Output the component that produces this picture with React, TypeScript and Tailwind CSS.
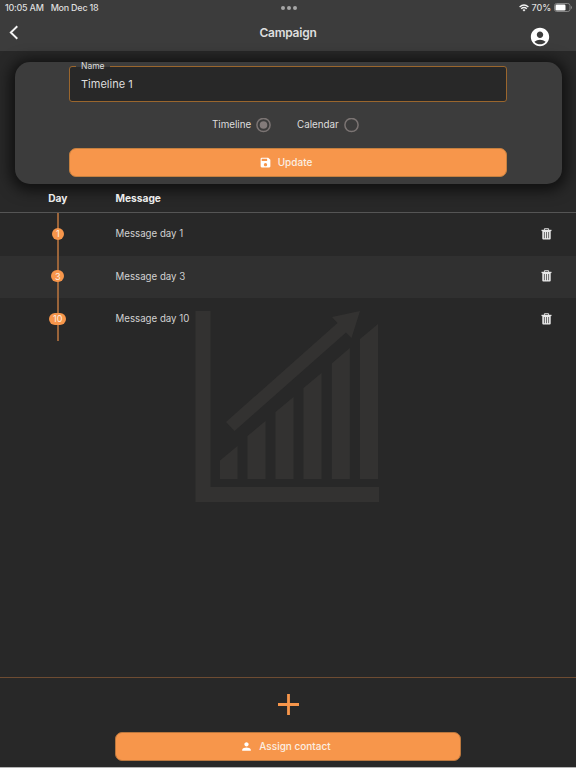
import { MdAccountCircle, MdPerson, MdSave } from 'react-icons/md';

type TimelineMessage = {
  day: number;
  text: string;
};

const messages: TimelineMessage[] = [
  { day: 1, text: 'Message day 1' },
  { day: 3, text: 'Message day 3' },
  { day: 10, text: 'Message day 10' },
];

export default function App() {
  return (
    <div className="flex h-[768px] w-[576px] flex-col overflow-hidden border-b border-[#b4b4b4] bg-[#282828] font-['Inter','Liberation_Sans',sans-serif] text-[#dedede]">
      <Header />
      <div className="px-[15px] pt-[11px]">
        <CampaignForm />
      </div>
      <MessageList />
      <Footer />
    </div>
  );
}

function Header() {
  return (
    <header className="h-[51px] shrink-0 bg-[#3c3c3c]">
      {/* Status bar */}
      <div className="grid h-[15px] grid-cols-3 items-center pl-[5px] pr-[4px] text-[9px] font-medium leading-none">
        <div className="flex gap-[7px] whitespace-nowrap tracking-[-0.25px]">
          <span>10:05 AM</span>
          <span>Mon Dec 18</span>
        </div>
        <div className="flex justify-center gap-[2px]">
          <span className="h-[4px] w-[4px] rounded-full bg-[#a6a6a6]" />
          <span className="h-[4px] w-[4px] rounded-full bg-[#a6a6a6]" />
          <span className="h-[4px] w-[4px] rounded-full bg-[#a6a6a6]" />
        </div>
        <div className="flex items-center justify-end gap-[3px]">
          <WifiIcon />
          <span className="tracking-[-0.1px]">70%</span>
          <BatteryIcon />
        </div>
      </div>
      {/* Title bar */}
      <div className="grid h-[36px] grid-cols-3 pl-[9px] pr-[25px]">
        <button className="flex items-start pt-[10px]">
          <svg width="10" height="15" viewBox="0 0 10 15" fill="none" stroke="#f4f4f4" strokeWidth="1.9">
            <path d="M8.3 1.2 1.8 7.5l6.5 6.3" />
          </svg>
        </button>
        <h1 className="pl-[16px] pt-[9px] text-center text-[12px] font-semibold leading-[17px] tracking-[-0.25px]">
          Campaign
        </h1>
        <button className="flex justify-end pt-[11px] text-white">
          <MdAccountCircle size={22} />
        </button>
      </div>
    </header>
  );
}

function CampaignForm() {
  return (
    <section className="h-[122px] w-[547px] rounded-[15px] bg-[#3c3c3c] px-[54px] pt-[4px] shadow-[0_2px_14px_5px_rgba(0,0,0,0.6)]">
      <div className="relative h-[36px] w-[438px] rounded-[3px] border border-[#9a662d] bg-[#282828] pl-[11px] pt-[8px]">
        <span className="absolute left-[6px] top-[-6px] px-[5px] text-[8.5px] leading-[11px]">
          <span className="absolute inset-x-0 top-[5px] h-px bg-[#3c3c3c]" />
          <span className="relative">Name</span>
        </span>
        <p className="text-[11px] leading-[19px]">Timeline 1</p>
      </div>
      <div className="flex h-[46px] items-center pl-[143px] text-[9.8px]">
        <span className="w-[44px]">Timeline</span>
        <Radio checked />
        <span className="ml-[26px] w-[47px]">Calendar</span>
        <Radio />
      </div>
      <button className="flex h-[29px] w-[438px] items-center justify-center gap-[6px] rounded-[7px] border border-[#c5803f] bg-[#f7964b] pr-[5px] text-[10px] font-medium text-[#fbefe3]">
        <MdSave size={13} className="text-white" />
        Update
      </button>
    </section>
  );
}

function Radio({ checked = false }: { checked?: boolean }) {
  return (
    <svg width="15" height="15" viewBox="0 0 15 15" fill="none">
      <circle cx="7.5" cy="7" r="6.6" stroke="#7b7473" strokeWidth="1.5" />
      {checked && <circle cx="7.5" cy="7" r="3.8" fill="#837b7a" />}
    </svg>
  );
}

function MessageList() {
  return (
    <main className="relative flex-1">
      <ChartWatermark />
      <div className="relative flex h-[29px] items-center border-b border-[#555555] pt-px text-[10.2px] font-bold text-[#ececec]">
        <span className="w-[115.5px] text-center">Day</span>
        <span>Message</span>
      </div>
      <ul className="relative">
        {messages.map((m) => (
          <MessageRow key={m.day} message={m} />
        ))}
      </ul>
    </main>
  );
}

function MessageRow({ message }: { message: TimelineMessage }) {
  return (
    <li className="flex h-[42.5px] items-center pr-[24px] even:bg-[#303030]">
      <div className="relative flex h-full w-[115.5px] items-center justify-center pb-px">
        <span className="absolute inset-y-0 left-[57px] w-[1.5px] bg-[#9a643a]" />
        <span className="relative flex h-[12px] min-w-[11.5px] items-center justify-center rounded-full bg-[#f7964b] px-[3.8px] text-[9px] leading-none text-[#fdeee0]">
          {message.day}
        </span>
      </div>
      <span className="flex-1 pt-px text-[9.7px] text-[#d2d2d2]">{message.text}</span>
      <button className="pb-px">
        <TrashIcon />
      </button>
    </li>
  );
}

function Footer() {
  return (
    <footer className="flex h-[90px] shrink-0 flex-col items-center border-t border-[#6e4c32]">
      <button className="mt-[16px]">
        <svg width="21" height="21" viewBox="0 0 21 21" fill="none" stroke="#f7964b" strokeWidth="2.8">
          <path d="M10.5 0v21M0 10.5h21" />
        </svg>
      </button>
      <button className="mt-[17px] flex h-[29px] w-[346px] items-center justify-center gap-[6px] rounded-[7px] border border-[#b9763d] bg-[#f7964b] pr-[5px] text-[10px] font-medium text-[#fbefe3]">
        <MdPerson size={13} className="text-white" />
        Assign contact
      </button>
    </footer>
  );
}

function ChartWatermark() {
  return (
    <svg
      className="absolute left-[195px] top-[127px]"
      width="185"
      height="192"
      viewBox="195 311 185 192"
      fill="#333231"
    >
      <path d="M195.5 311h15v176h168.5v15H195.5z" />
      <path d="M226 422 337.5 323l-5.5-6 28-6-8.500 27-5.500-5.500L234.500 431z" />
      <path d="M220 460.500l17.500-14.500v33H220zM247.500 436l18-15v58h-18zM275.500 412l18-15v82h-18zM303.500 388l18-15v106h-18zM331.800 363.500l18-15.500v131h-18zM360 339l18-15v155h-18z" />
    </svg>
  );
}

function TrashIcon() {
  return (
    <svg width="11" height="12" viewBox="0 0 11 12" fill="none">
      <path d="M3.4 2V.7h4.200V2" stroke="#d8d8d8" />
      <path d="M.5 1.800h10v1.300H.5z" fill="#e8e8e8" />
      <path d="M1.300 3h8.400v7.600q0 1-1 1H2.300q-1 0-1-1z" fill="#e8e8e8" />
      <path d="M3.400 4v6.200M5.500 4v6.200M7.600 4v6.200" stroke="#4a4a4a" strokeWidth=".8" />
    </svg>
  );
}

function WifiIcon() {
  return (
    <svg width="10" height="8" viewBox="0 0 10 8" fill="none" stroke="#f2f2f2" strokeWidth="1.4">
      <path d="M.6 3Q5-.9 9.400 3M2.200 4.800Q5 2.300 7.800 4.800" />
      <path d="M3.500 5.900Q5 4.700 6.500 5.900L5 7.500z" fill="#f2f2f2" stroke="none" />
    </svg>
  );
}

function BatteryIcon() {
  return (
    <svg width="18" height="9" viewBox="0 0 18 9" fill="none">
      <rect x=".5" y=".5" width="15.5" height="8" rx="2.2" stroke="#858585" />
      <rect x="1.5" y="1.5" width="10" height="6" rx="1.2" fill="#fff" />
      <path d="M17 3v3q1-.4 1-1.500T17 3z" fill="#858585" />
    </svg>
  );
}
